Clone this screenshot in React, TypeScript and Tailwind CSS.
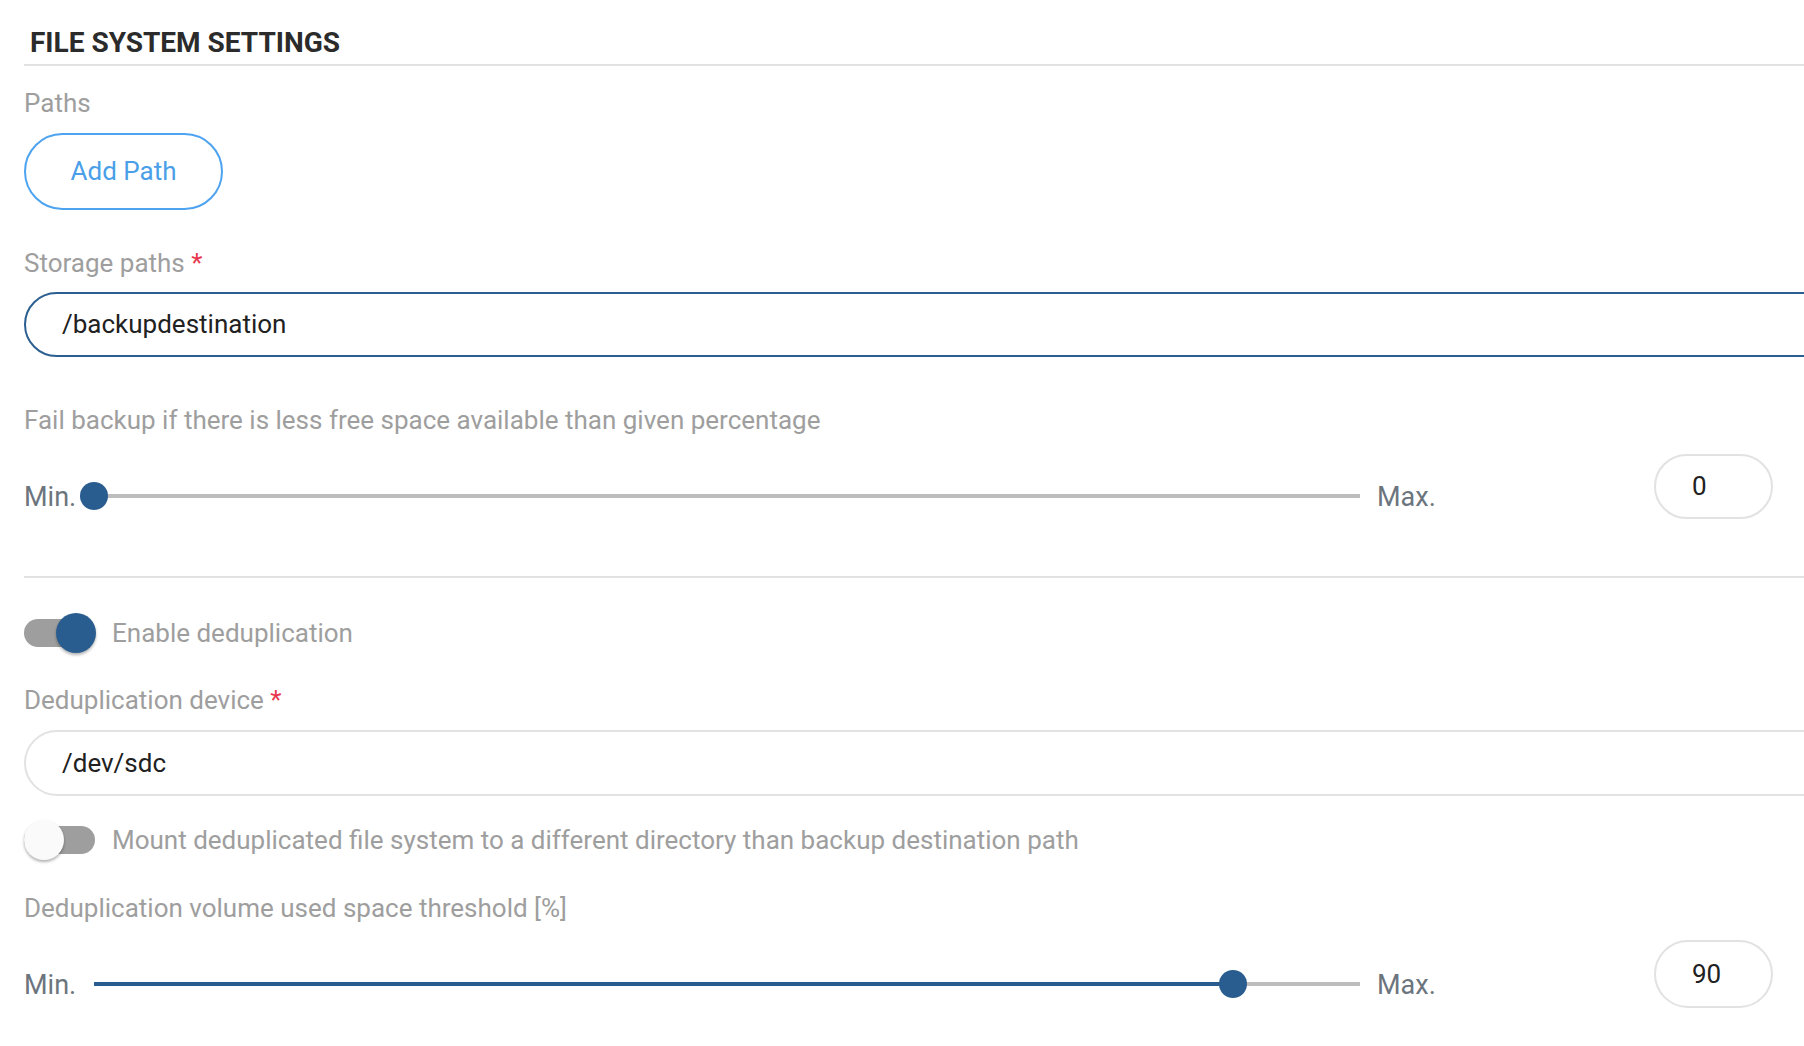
import React from "react";

const labelCls = "text-[26px] leading-[30px] text-[#9e9e9e]";

/** Rounded text field; the focused one gets the dark blue border. */
function Field({ value, focused, height, mt }: { value: string; focused?: boolean; height: string; mt: string }) {
  return (
    <div
      className={
        focused
          ? `${mt} flex ${height} w-[1880px] items-center rounded-full border-2 border-[#2b5f91] pl-[36px] text-[26px] text-[#212121]`
          : `${mt} flex ${height} w-[1880px] items-center rounded-full border-2 border-[#e2e2e2] pl-[36px] text-[26px] text-[#212121]`
      }
    >
      {value}
    </div>
  );
}

function Required({ children }: { children: React.ReactNode }) {
  return (
    <div className={labelCls}>
      {children} <span className="text-[#e8384f]">*</span>
    </div>
  );
}

function Slider({ value, mt, lineMt, boxH }: { value: number; mt: string; lineMt: string; boxH: string }) {
  const pct = value / 100;
  return (
    <div className={`${mt} flex w-[1749px] items-start`}>
      <div className={`${lineMt} flex h-[28px] items-center`}>
        <span className="mt-[1px] w-[70px] text-[27px] leading-[28px] text-[#6c757d]">Min.</span>
        <div className="relative h-[4px] w-[1266px] bg-[#bdbdbd]">
          <div className="h-full bg-[#2a5d8f]" style={{ width: `${pct * 100}%` }} />
          <div
            className="absolute top-[-12px] h-[28px] w-[28px] rounded-full bg-[#2a5d8f]"
            style={{ left: `calc(${pct * 100}% - 14px)` }}
          />
        </div>
        <span className="ml-[17px] mt-[1px] text-[27px] leading-[28px] text-[#6c757d]">Max.</span>
      </div>
      <div
        className={`ml-auto flex ${boxH} w-[119px] items-center rounded-full border-2 border-[#e2e2e2] pl-[36px] text-[26px] text-[#212121]`}
      >
        {value}
      </div>
    </div>
  );
}

function Toggle({ on }: { on: boolean }) {
  return (
    <div className="relative h-[40px] w-[72px] shrink-0">
      <div className="absolute left-0 top-[6px] h-[28px] w-[71px] rounded-full bg-[#9e9e9e]" />
      {on ? (
        <div className="absolute left-[32px] top-0 h-[40px] w-[40px] rounded-full bg-[#2a5d8f] shadow-[0_2px_3px_rgba(0,0,0,0.3)]" />
      ) : (
        <div className="absolute left-0 top-0 h-[40px] w-[40px] rounded-full bg-[#fafafa] shadow-[0_2px_3px_rgba(0,0,0,0.3)]" />
      )}
    </div>
  );
}

export default function App() {
  return (
    <div className="h-[1046px] w-[1804px] overflow-hidden bg-white font-['Roboto',sans-serif]">
      <div className="w-[1900px] pl-[24px]">
        <h2 className="border-b-2 border-[#e2e2e2] pb-[4px] pl-[6px] pt-[26px] text-[28px] font-bold leading-[34px] text-[#2b2b2b]">
          FILE SYSTEM SETTINGS
        </h2>

        <div className={`mt-[22px] ${labelCls}`}>Paths</div>
        <button className="mt-[15px] block h-[77px] w-[199px] rounded-full border-2 border-[#4da3f0] text-[26px] text-[#4a9fe8]">
          Add Path
        </button>

        <div className="mt-[38px]">
          <Required>Storage paths</Required>
        </div>
        <Field value="/backupdestination" focused height="h-[65px]" mt="mt-[14px]" />

        <div className={`mt-[48px] ${labelCls}`}>
          Fail backup if there is less free space available than given percentage
        </div>
        <Slider value={0} mt="mt-[19px]" lineMt="mt-[28px]" boxH="h-[65px]" />

        <div className="mt-[57px] h-[2px] w-[1880px] bg-[#e2e2e2]" />

        <div className="mt-[35px] flex items-center gap-[16px]">
          <Toggle on />
          <span className={labelCls}>Enable deduplication</span>
        </div>

        <div className="mt-[32px]">
          <Required>Deduplication device</Required>
        </div>
        <Field value="/dev/sdc" height="h-[66px]" mt="mt-[15px]" />

        <div className="mt-[24px] flex items-center gap-[16px]">
          <Toggle on={false} />
          <span className={labelCls}>
            Mount deduplicated file system to a different directory than backup destination path
          </span>
        </div>

        <div className={`mt-[33px] ${labelCls}`}>Deduplication volume used space threshold [%]</div>
        <Slider value={90} mt="mt-[17px]" lineMt="mt-[30px]" boxH="h-[68px]" />
      </div>
    </div>
  );
}
